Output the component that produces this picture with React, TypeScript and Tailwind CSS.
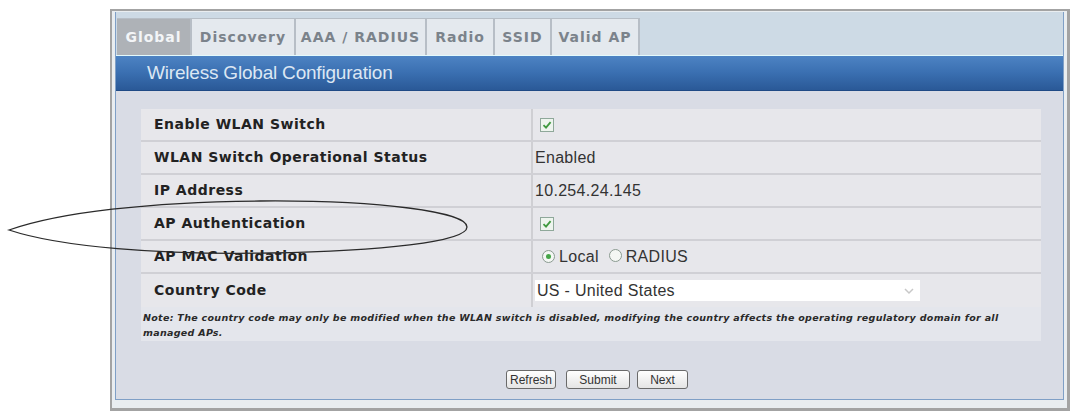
import React from "react";

const verdana = "'DejaVu Sans', Verdana, sans-serif";
const arial = "'Liberation Sans', Arial, sans-serif";

type Tab = { label: string; w: string; active?: boolean };

const tabs: Tab[] = [
  { label: "Global", w: "w-[75px]", active: true },
  { label: "Discovery", w: "w-[104px]" },
  { label: "AAA / RADIUS", w: "w-[131px]" },
  { label: "Radio", w: "w-[68px]" },
  { label: "SSID", w: "w-[57px]" },
  { label: "Valid AP", w: "w-[88px]" },
];

function CheckBox() {
  return (
    <span className="inline-flex w-[14px] h-[14px] border border-[#8fa89a] bg-[#eef5ee] items-center justify-center">
      <svg width="10" height="10" viewBox="0 0 10 10">
        <path d="M1.5 5.2 L4 7.6 L8.6 2.2" fill="none" stroke="#3f9a3f" strokeWidth="1.8" />
      </svg>
    </span>
  );
}

function Radio({ on }: { on?: boolean }) {
  return (
    <span className="inline-flex w-[13px] h-[13px] rounded-full border border-[#8a9a90] bg-[#f4f7f4] items-center justify-center">
      {on && <span className="w-[5px] h-[5px] rounded-full bg-[#45a548]" />}
    </span>
  );
}

function Row({ label, children, last }: { label: string; children: React.ReactNode; last?: boolean }) {
  return (
    <div className={`flex h-[33px] ${last ? "" : "border-b-2 border-[#d0d0d5]"}`}>
      <div
        className="w-[390px] flex items-center pl-[13px] text-[14px] font-bold tracking-[0.5px] text-[#222]"
        style={{ fontFamily: verdana }}
      >
        {label}
      </div>
      <div className="w-[2px] bg-[#cfcfd3]" />
      <div
        className="flex-1 flex items-center pl-[2px] text-[16px] tracking-[0.3px] text-[#333]"
        style={{ fontFamily: arial }}
      >
        {children}
      </div>
    </div>
  );
}

function Button({ label, w }: { label: string; w: string }) {
  return (
    <button
      className={`${w} h-[19px] rounded-[3px] border border-[#6a6a6a] bg-gradient-to-b from-[#ffffff] to-[#e4e4e4] text-[12px] text-[#333] leading-none flex items-center justify-center`}
      style={{ fontFamily: arial }}
    >
      {label}
    </button>
  );
}

export default function App() {
  return (
    <div className="relative w-[1076px] h-[415px] bg-white overflow-hidden">
      <div className="pt-[9px] pl-[110px]">
        {/* outer frame */}
        <div className="w-[960px] h-[402px] border-l-2 border-t-2 border-r-[3px] border-b-[3px] border-[#a3a3a3] bg-[#e9edf0] pl-[3px] pr-[3px] pt-[1px] pb-[8px] flex flex-col">
          <div className="flex-1 flex flex-col border-l border-r border-b border-[#7f9fc6] bg-[#d9dce5]">
            {/* tab strip */}
            <div className="h-[44px] bg-[#cddae5] pt-[6px] pl-[1px] flex border-b border-[#e4fafc]">
              {tabs.map((t) => (
                <div
                  key={t.label}
                  className={`${t.w} h-[37px] flex items-center justify-center text-[14px] font-bold tracking-[1px] border-r-2 border-t border-[#b7bec6] ${
                    t.active ? "bg-[#aeb2b7] text-[#f3f5f7]" : "bg-[#e4e9ee] text-[#7b838b]"
                  }`}
                  style={{ fontFamily: verdana }}
                >
                  {t.label}
                </div>
              ))}
            </div>
            {/* section header */}
            <div
              className="h-[35px] bg-gradient-to-b from-[#4d83c3] via-[#3a6fb1] to-[#2a5997] border-b border-[#1f4a85] flex items-center pl-[31px] text-[19px] tracking-[-0.2px] text-[#dce7f3]"
              style={{ fontFamily: arial }}
            >
              Wireless Global Configuration
            </div>
            {/* content */}
            <div className="flex-1 pl-[25px] pr-[22px] pt-[18px] flex flex-col">
              <div className="bg-[#e7e7eb]">
                <Row label="Enable WLAN Switch">
                  <span className="ml-[5px]">
                    <CheckBox />
                  </span>
                </Row>
                <Row label="WLAN Switch Operational Status">Enabled</Row>
                <Row label="IP Address">10.254.24.145</Row>
                <Row label="AP Authentication">
                  <span className="ml-[5px]">
                    <CheckBox />
                  </span>
                </Row>
                <Row label="AP MAC Validation">
                  <span className="ml-[7px] flex items-center gap-[4px]">
                    <Radio on />
                    <span>Local</span>
                    <span className="ml-[6px]">
                      <Radio />
                    </span>
                    <span>RADIUS</span>
                  </span>
                </Row>
                <Row label="Country Code" last>
                  <div className="w-[385px] h-[21px] bg-white flex items-center justify-between pl-[2px] pr-[6px]">
                    <span>US - United States</span>
                    <svg width="10" height="8" viewBox="0 0 10 8">
                      <path d="M1 2 L5 6 L9 2" fill="none" stroke="#c8c8c8" strokeWidth="1.5" />
                    </svg>
                  </div>
                </Row>
              </div>
              <div
                className="h-[34px] bg-[#e4e6ec] pl-[2px] pt-[3px] text-[9.5px] leading-[15px] italic font-semibold text-[#2a2a2a] tracking-[0.3px]"
                style={{ fontFamily: verdana }}
              >
                Note: The country code may only be modified when the WLAN switch is disabled, modifying the country
                affects the operating regulatory domain for all
                <br />
                managed APs.
              </div>
              <div className="mt-[29px] pl-[365px] flex">
                <Button label="Refresh" w="w-[50px]" />
                <span className="w-[10px]" />
                <Button label="Submit" w="w-[64px]" />
                <span className="w-[7px]" />
                <Button label="Next" w="w-[51px]" />
              </div>
            </div>
          </div>
        </div>
      </div>
      {/* hand-drawn ellipse over the table */}
      <svg className="absolute left-0 top-0 pointer-events-none" width="1076" height="415">
        <path
          d="M 9 230 C 60 212, 150 202, 260 201 C 380 200, 467 212, 467 227 C 467 242, 380 251, 270 253 C 160 255, 60 247, 9 230 Z"
          fill="none"
          stroke="#2a2a2a"
          strokeWidth="1.3"
        />
      </svg>
    </div>
  );
}
